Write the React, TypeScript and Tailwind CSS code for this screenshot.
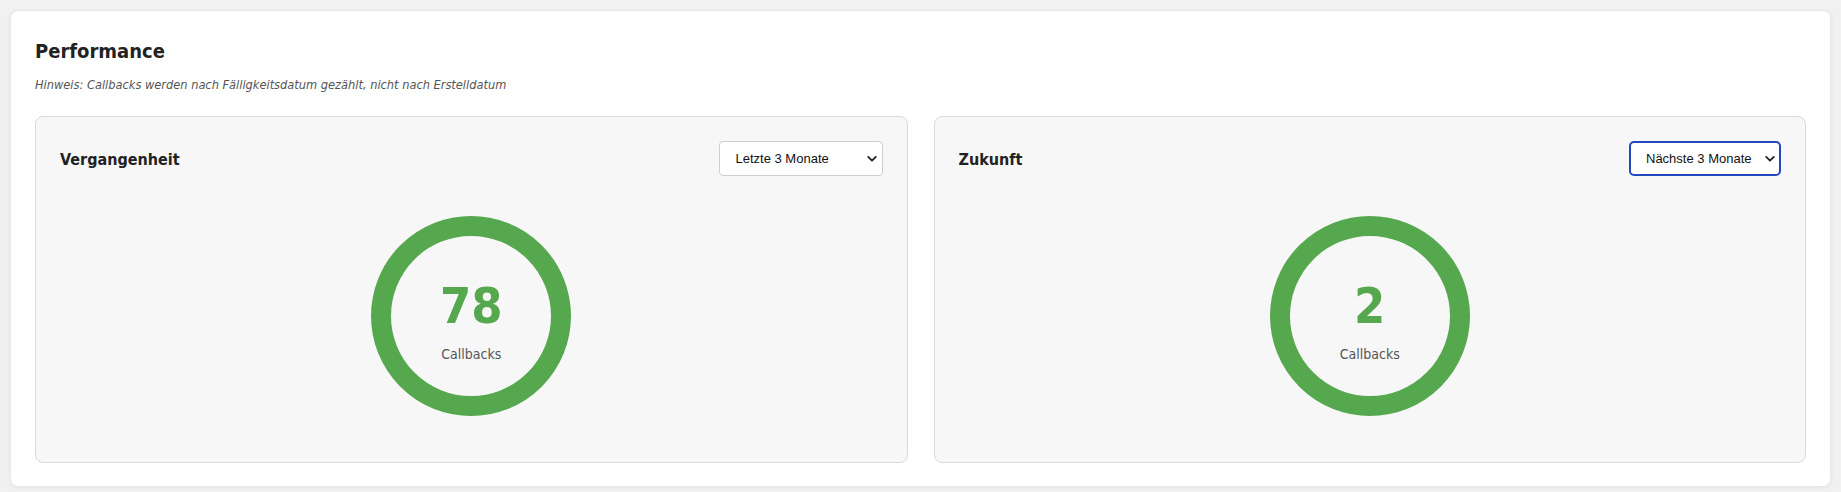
import React from "react";

function Chevron() {
  return (
    <svg width="10" height="7" viewBox="0 0 10 7" className="pointer-events-none absolute right-[6px] top-1/2 -translate-y-1/2">
      <path d="M1.2 1.4 L5 5.2 L8.8 1.4" fill="none" stroke="#222" strokeWidth="1.8" strokeLinecap="round" strokeLinejoin="round" />
    </svg>
  );
}

function Panel({ title, value, option, focused, selectWidth }: { title: string; value: number; option: string; focused?: boolean; selectWidth: string }) {
  return (
    <div className="flex flex-col rounded-[8px] border border-[#dadada] bg-[#f7f7f7] px-6 pt-6 pb-6">
      <div className="mb-[40px] flex h-[35px] items-center justify-between">
        <h3 className="mt-[2px] text-[16px] font-bold leading-[20px] text-[#222]">{title}</h3>
        <div className={`relative ${selectWidth}`}>
          <select
            defaultValue={option}
            className={
              focused
                ? "h-[35px] w-full appearance-none rounded-[5px] border-2 border-[#2448c0] bg-white pl-[15px] pr-6 font-['Liberation_Sans',Arial,sans-serif] text-[13px] text-[#111] outline-none"
                : "h-[35px] w-full appearance-none rounded-[4px] border border-[#cfcfcf] bg-white pl-4 pr-6 font-['Liberation_Sans',Arial,sans-serif] text-[13px] text-[#111] outline-none"
            }
          >
            <option>{option}</option>
          </select>
          <Chevron />
        </div>
      </div>
      <div className="mb-[22px] flex justify-center">
        <div className="flex h-[200px] w-[200px] flex-col items-center justify-center rounded-full border-[20px] border-[#56a84e] pt-[12px]">
          <div className="text-[50px] font-bold leading-[50px] text-[#56a84e]">{value}</div>
          <div className="mt-[13px] text-[14px] leading-[20px] text-[#555]">Callbacks</div>
        </div>
      </div>
    </div>
  );
}

export default function App() {
  return (
    <div className="min-h-screen bg-[#f1f1f1] p-[10px] font-['DejaVu_Sans_Condensed','DejaVu_Sans',sans-serif]">
      <div className="rounded-[8px] border border-[#e8e8e8] bg-white px-6 pt-[25px] pb-[23px] shadow-[0_1px_4px_rgba(0,0,0,0.06)]">
        <h2 className="text-[20px] font-bold leading-[30px] text-[#222]">Performance</h2>
        <p className="mt-[9px] text-[12.7px] italic leading-[20px] text-[#555]">
          Hinweis: Callbacks werden nach Fälligkeitsdatum gezählt, nicht nach Erstelldatum
        </p>
        <div className="mt-[21px] grid grid-cols-2 gap-[26px]">
          <Panel title="Vergangenheit" value={78} option="Letzte 3 Monate" selectWidth="w-[164px]" />
          <Panel title="Zukunft" value={2} option="Nächste 3 Monate" focused selectWidth="w-[152px]" />
        </div>
      </div>
    </div>
  );
}
